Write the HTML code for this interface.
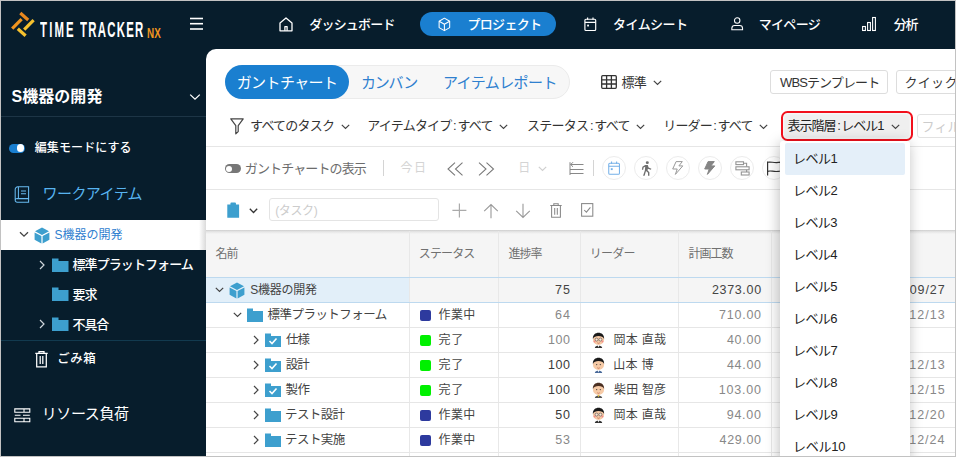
<!DOCTYPE html>
<html lang="ja">
<head>
<meta charset="utf-8">
<title>TimeTracker NX</title>
<style>
*{box-sizing:border-box;margin:0;padding:0}
html,body{width:956px;height:457px;overflow:hidden;background:#071d2c}
body{font-family:"Liberation Sans","Noto Sans CJK JP",sans-serif;font-size:13px;color:#333;position:relative}
#frame{position:absolute;left:0;top:0;width:956px;height:457px;border:1px solid #c2c2c2;z-index:100;pointer-events:none}
.nav{position:absolute;top:0;left:0;width:956px;height:48px;background:#071d2c;color:#fff}
.side{position:absolute;left:0;top:0;width:206px;height:457px;color:#fff}
.panel{position:absolute;left:206px;top:48.5px;width:750px;height:409px;background:#fff;border-top-left-radius:10px;overflow:hidden}
.t{position:absolute;white-space:nowrap;line-height:1;transform-origin:0 50%}
.hl{position:absolute;height:1px;background:#e6e6e6}
.vl{position:absolute;width:1px;background:#e8e8e8}
svg{position:absolute;overflow:visible}
.b{font-weight:bold}
.cb{position:absolute;top:156px;width:24px;height:24px;border-radius:12px;border:1px solid #ececec;background:#fff}
</style>
</head>
<body>
<div class="nav">
  <!-- logo -->
  <svg style="left:0;top:0" width="206" height="48" viewBox="0 0 206 48">
    <g stroke-width="3.2" stroke-linecap="butt" fill="none">
      <line x1="20.3" y1="13" x2="28.2" y2="20" stroke="#e8871e"/>
      <line x1="12.2" y1="28.6" x2="21.6" y2="19.2" stroke="#f0951f"/>
      <line x1="24.2" y1="29.6" x2="33.6" y2="20.2" stroke="#f6c12e"/>
      <line x1="17.8" y1="28.8" x2="25.6" y2="35.8" stroke="#f6c12e"/>
    </g>
    <g stroke="#fff" stroke-width="1.6" fill="none">
      <line x1="190" y1="18.5" x2="203" y2="18.5"/><line x1="190" y1="23.7" x2="203" y2="23.7"/><line x1="190" y1="29" x2="203" y2="29"/>
    </g>
  </svg>
  <div style="position:absolute;left:420px;top:12px;width:136px;height:24px;border-radius:12px;background:#1a7fd0"></div>
  <!-- home -->
  <svg style="left:279px;top:16.6px" width="14" height="14.6" viewBox="0 0 14 14.6" fill="none" stroke="#fff" stroke-width="1.3" stroke-linejoin="round"><path d="M1 6 L7 0.9 L13 6 V13.8 H1 Z"/><path d="M5.9 13.8 V9.6 H8.1 V13.8"/></svg>
  <!-- cube -->
  <svg style="left:437.6px;top:16.6px" width="12.8" height="14.8" viewBox="0 0 16 18" fill="none" stroke="#fff" stroke-width="1.3" stroke-linejoin="round"><path d="M8 1.2 L14.6 5 V13 L8 16.8 L1.4 13 V5 Z"/><path d="M1.4 5 L8 8.8 L14.6 5 M8 8.8 V16.8"/></svg>
  <!-- calendar -->
  <svg style="left:583.5px;top:17px" width="12.6" height="14.4" viewBox="0 0 14 16" fill="none" stroke="#fff" stroke-width="1.3"><rect x="1" y="2.5" width="12" height="12.5" rx="1.2"/><path d="M1 6 H13 M4 0.5 V3 M10 0.5 V3"/><rect x="3.5" y="8.5" width="2" height="2" fill="#fff" stroke="none"/></svg>
  <!-- person -->
  <svg style="left:730.5px;top:16px" width="12.4" height="15" viewBox="0 0 15 17" fill="none" stroke="#fff" stroke-width="1.3"><circle cx="7.5" cy="4.8" r="3.3"/><path d="M1 16 V14.5 A3.5 3.5 0 0 1 4.5 11 H10.5 A3.5 3.5 0 0 1 14 14.5 V16 Z"/></svg>
  <!-- chart -->
  <svg style="left:862px;top:16px" width="14" height="16" viewBox="0 0 14 16" fill="none" stroke="#fff" stroke-width="1.1"><rect x="0.6" y="10.5" width="2.8" height="4"/><rect x="5.6" y="6.5" width="2.8" height="8"/><rect x="10.6" y="1.5" width="2.8" height="13"/></svg>
</div>

<div class="side">
  <!-- title chevron -->
  <svg style="left:189px;top:93px" width="12" height="8" viewBox="0 0 12 8" fill="none" stroke="#fff" stroke-width="1.3"><path d="M1.2 1.6 L6 6.2 L10.8 1.6"/></svg>
  <div style="position:absolute;left:0;top:116px;width:206px;height:1px;background:#1d3546"></div>
  <!-- toggle -->
  <div style="position:absolute;left:9px;top:143.5px;width:16px;height:9px;border-radius:4.5px;background:#1a7fd0"></div>
  <div style="position:absolute;left:16.8px;top:144.3px;width:7.4px;height:7.4px;border-radius:4px;background:#fff"></div>
  <!-- book -->
  <svg style="left:14px;top:185.5px" width="16" height="17" viewBox="0 0 16 17" fill="none" stroke="#68baf0" stroke-width="1.05"><path d="M14.6 12.6 V0.8 H3.8 A2.6 2.6 0 0 0 1.2 3.4 V14.3 M1.2 14.3 A1.9 1.9 0 0 1 3.1 12.6 H14.6 V16.2 H3.1 A1.9 1.9 0 0 1 1.2 14.3 M4.4 0.8 V12.6 M7 5 H12 M7 7.8 H12"/></svg>
  <!-- selected -->
  <div style="position:absolute;left:0;top:220px;width:210px;height:30px;background:#fff"></div>
  <div style="position:absolute;left:199px;top:220px;width:7px;height:30px;background:linear-gradient(to right,#fff,#dadada)"></div>
  <svg style="left:19px;top:231px" width="10" height="7" viewBox="0 0 10 7" fill="none" stroke="#444" stroke-width="1.3"><path d="M1 1.2 L5 5.2 L9 1.2"/></svg>
  <svg style="left:34px;top:227px" width="16" height="17" viewBox="0 0 16 17"><path d="M8 0.5 L15 4.2 L8 7.9 L1 4.2 Z M0.6 5.4 L7.4 9 V16.5 L0.6 12.8 Z M15.4 5.4 L8.6 9 V16.5 L15.4 12.8 Z" fill="#3d9fce"/></svg>
  <!-- tree -->
  <svg style="left:39px;top:260px" width="6" height="10" viewBox="0 0 6 10" fill="none" stroke="#cfd6db" stroke-width="1.2"><path d="M1 1 L5 5 L1 9"/></svg>
  <svg style="left:52px;top:258px" width="17" height="14" viewBox="0 0 17 14"><path d="M0 0.5 H6.5 V3 H16.5 V14 H0 Z" fill="#3d9fce"/></svg>
  <svg style="left:52px;top:287px" width="17" height="14" viewBox="0 0 17 14"><path d="M0 0.5 H6.5 V3 H16.5 V14 H0 Z" fill="#3d9fce"/></svg>
  <svg style="left:39px;top:319px" width="6" height="10" viewBox="0 0 6 10" fill="none" stroke="#cfd6db" stroke-width="1.2"><path d="M1 1 L5 5 L1 9"/></svg>
  <svg style="left:52px;top:317px" width="17" height="14" viewBox="0 0 17 14"><path d="M0 0.5 H6.5 V3 H16.5 V14 H0 Z" fill="#3d9fce"/></svg>
  <div style="position:absolute;left:0;top:339.5px;width:206px;height:1px;background:#123a4f"></div>
  <!-- trash -->
  <svg style="left:34.5px;top:350.5px" width="13" height="17" viewBox="0 0 13 17" fill="none" stroke="#fff" stroke-width="1.25"><path d="M0.3 2.3 H12.7 M4 2.3 V0.7 H9 V2.3 M1.7 2.3 V15.8 H11.3 V2.3 M5.2 5 V13 M7.8 5 V13"/></svg>
  <!-- resource -->
  <svg style="left:14px;top:408px" width="17" height="15" viewBox="0 0 17 15" fill="none" stroke="#fff" stroke-width="1.1"><path d="M0.8 0.9 H15.8 V4.3 H0.8 Z M10 0.9 V4.3 M0.8 7.3 H6.5 M9 7.3 H15.8 M0.8 10.3 H15.8 V13.7 H0.8 Z M10 10.3 V13.7"/></svg>
</div>

<div class="panel"></div>
<div id="pc" style="position:absolute;left:0;top:0;width:956px;height:457px;overflow:hidden">
<div style="position:absolute;left:225px;top:65px;width:345px;height:34px;border-radius:17px;background:#f7f7f7;border:1px solid #ebebeb"></div>
<div style="position:absolute;left:225px;top:65px;width:124px;height:34px;border-radius:17px;background:#1a7fd0"></div>
<svg style="left:601px;top:75px" width="16" height="14" viewBox="0 0 16 14" fill="none" stroke="#333" stroke-width="1.3"><rect x="0.7" y="0.7" width="14.6" height="12.6" rx="1"/><path d="M0.7 4.8 H15.3 M0.7 9 H15.3 M5.6 0.7 V13.3 M10.4 0.7 V13.3"/></svg>
<svg style="left:653px;top:80px" width="9" height="6" viewBox="0 0 9 6" fill="none" stroke="#444" stroke-width="1.2"><path d="M0.8 0.8 L4.5 4.5 L8.2 0.8"/></svg>
<div style="position:absolute;left:770px;top:70px;width:118px;height:24px;border:1px solid #ddd;border-radius:3px;background:#fff"></div>
<div style="position:absolute;left:896px;top:70px;width:80px;height:24px;border:1px solid #ddd;border-radius:3px;background:#fff"></div>
<svg style="left:230px;top:117.5px" width="14" height="17" viewBox="0 0 14 17" fill="none" stroke="#444" stroke-width="1.2" stroke-linejoin="round"><path d="M0.8 0.8 H13.2 L8.2 7.6 V13.6 L5.8 15.8 V7.6 Z"/></svg>
<svg style="left:341px;top:123.5px" width="9" height="6" viewBox="0 0 9 6" fill="none" stroke="#444" stroke-width="1.2"><path d="M0.8 0.8 L4.5 4.5 L8.2 0.8"/></svg>
<svg style="left:499px;top:123.5px" width="9" height="6" viewBox="0 0 9 6" fill="none" stroke="#444" stroke-width="1.2"><path d="M0.8 0.8 L4.5 4.5 L8.2 0.8"/></svg>
<svg style="left:636px;top:123.5px" width="9" height="6" viewBox="0 0 9 6" fill="none" stroke="#444" stroke-width="1.2"><path d="M0.8 0.8 L4.5 4.5 L8.2 0.8"/></svg>
<svg style="left:759px;top:123.5px" width="9" height="6" viewBox="0 0 9 6" fill="none" stroke="#444" stroke-width="1.2"><path d="M0.8 0.8 L4.5 4.5 L8.2 0.8"/></svg>
<div style="position:absolute;left:781px;top:111px;width:132px;height:30px;border:2.4px solid #f2101c;border-radius:6.5px;background:#efefef;box-shadow:inset 0 0 2px 1px #fafafa"></div>
<svg style="left:891px;top:123.5px" width="9" height="6" viewBox="0 0 9 6" fill="none" stroke="#444" stroke-width="1.2"><path d="M0.8 0.8 L4.5 4.5 L8.2 0.8"/></svg>
<div style="position:absolute;left:917px;top:114px;width:60px;height:24px;border:1px solid #e2e2e2;border-radius:3px;background:#fff"></div>
<div class="hl" style="left:206px;top:146px;width:750px"></div>
<div class="hl" style="left:206px;top:189px;width:750px"></div>
<div style="position:absolute;left:224.5px;top:164px;width:16px;height:9px;border-radius:4.5px;background:#777"></div>
<div style="position:absolute;left:226px;top:165.5px;width:6px;height:6px;border-radius:3px;background:#fff"></div>
<div class="vl" style="left:383px;top:160px;height:16px;background:#d4d4d4"></div>
<svg style="left:447.2px;top:161.5px" width="17" height="14" viewBox="0 0 17 14" fill="none" stroke="#777" stroke-width="1.05"><path d="M8 0.7 L1 7 L8 13.3 M15.5 0.7 L8.5 7 L15.5 13.3"/></svg>
<svg style="left:478.3px;top:161.5px" width="17" height="14" viewBox="0 0 17 14" fill="none" stroke="#777" stroke-width="1.05"><path d="M1 0.7 L8 7 L1 13.3 M8.5 0.7 L15.5 7 L8.5 13.3"/></svg>
<svg style="left:537.5px;top:166px" width="9" height="6" viewBox="0 0 9 6" fill="none" stroke="#d0d0d0" stroke-width="1.2"><path d="M0.8 0.8 L4.5 4.5 L8.2 0.8"/></svg>
<svg style="left:568.5px;top:161px" width="15" height="15" viewBox="0 0 15 15" fill="none" stroke="#888" stroke-width="1"><path d="M1 1.2 V14 M1.5 3.5 H14.5 M4 1.2 L1.7 3.5 L4 5.8 M1 8.5 H14.5 M1 12.5 H14.5"/></svg>
<div class="vl" style="left:593px;top:160px;height:16px;background:#d4d4d4"></div>
<div class="cb" style="left:602px"></div>
<div class="cb" style="left:634px"></div>
<div class="cb" style="left:666px"></div>
<div class="cb" style="left:698px"></div>
<div class="cb" style="left:730px"></div>
<div class="cb" style="left:762px"></div>
<svg style="left:608px;top:160.8px" width="12.2" height="14.4" viewBox="0 0 13 15" fill="none" stroke="#74b0e8" stroke-width="1.1"><rect x="0.8" y="2.2" width="11.4" height="11.8" rx="1.2"/><path d="M0.8 5.5 H12.2 M3.8 0.3 V2.8 M9.2 0.3 V2.8"/><rect x="3" y="7.5" width="2" height="2" fill="#74b0e8" stroke="none"/></svg>
<svg style="left:641px;top:160.5px" width="11" height="16" viewBox="0 0 11 16" fill="#6e6e6e" stroke="none"><g transform="scale(1.0,0.94)"><circle cx="6.3" cy="1.8" r="1.5"/><path d="M4.2 4.2 L6.8 4.2 L7.6 7 L10.4 8.2 L9.9 9.4 L6.8 8.2 L6.6 10 L8.4 12 L8.4 15.8 L7 15.8 L7 12.6 L5 10.6 L3.6 15.8 L2.1 15.8 L3.9 9.8 L4.2 6.2 L2.6 7 L2.2 9.4 L0.9 9.2 L1.4 6.1 Z"/></g></svg>
<svg style="left:672.3px;top:161.3px" width="12" height="14" viewBox="0 0 12 14" fill="none" stroke="#999" stroke-width="1" stroke-linejoin="round"><path d="M4.1 0.6 H10.3 L6.9 4.9 H10.8 L3.4 13.4 L5.2 8 H0.7 Z"/></svg>
<svg style="left:704.3px;top:161.3px" width="12" height="14" viewBox="0 0 12 14" fill="#858585" stroke="#858585" stroke-width="1" stroke-linejoin="round"><path d="M4.1 0.6 H10.3 L6.9 4.9 H10.8 L3.4 13.4 L5.2 8 H0.7 Z"/></svg>
<svg style="left:734.5px;top:160.7px" width="16" height="15" viewBox="0 0 16 15" fill="none" stroke="#949494" stroke-width="1.1"><rect x="0.9" y="0.8" width="7.6" height="2.8"/><rect x="0.9" y="5.8" width="13.2" height="3"/><rect x="6.3" y="11" width="7.8" height="3"/><path d="M8.5 2.2 H11.6 V5.8 M11.6 8.8 V11"/></svg>
<svg style="left:767px;top:160.5px" width="15" height="15" viewBox="0 0 15 15" fill="none" stroke="#333" stroke-width="1.2"><path d="M0.6 0.4 V14.6 M0.6 1.3 C4 0.2 7 2.6 13.5 1.2 V10 C7 11.6 4 9 0.6 10.4"/></svg>
<svg style="left:227px;top:201.5px" width="12.4" height="16" viewBox="0 0 13 16" preserveAspectRatio="none"><path d="M0.3 2.6 H3.6 V1.4 A1 1 0 0 1 4.6 0.4 H8.4 A1 1 0 0 1 9.4 1.4 V2.6 H12.7 V15.8 H0.3 Z" fill="#3d9fce"/></svg>
<svg style="left:249px;top:207.5px" width="9" height="6" viewBox="0 0 9 6" fill="none" stroke="#333" stroke-width="1.3"><path d="M0.8 0.8 L4.5 4.5 L8.2 0.8"/></svg>
<div style="position:absolute;left:269px;top:198px;width:170px;height:23px;border:1px solid #e4e4e4;border-radius:3px;background:#fff"></div>
<svg style="left:452px;top:203px" width="15" height="15" viewBox="0 0 15 15" fill="none" stroke="#aaa" stroke-width="1.2"><path d="M7.4 0.4 V14.4 M0.4 7.4 H14.4"/></svg>
<svg style="left:483px;top:202.5px" width="16" height="16" viewBox="0 0 16 16" fill="none" stroke="#999" stroke-width="1.1"><path d="M8 15.2 V1.5 M1.2 8.2 L8 1.5 L14.8 8.2"/></svg>
<svg style="left:515px;top:202.5px" width="16" height="16" viewBox="0 0 16 16" fill="none" stroke="#999" stroke-width="1.1"><path d="M8 0.8 V14.5 M1.2 7.8 L8 14.5 L14.8 7.8"/></svg>
<svg style="left:549.5px;top:202.5px" width="12" height="15" viewBox="0 0 12 15" fill="none" stroke="#888" stroke-width="1.05"><path d="M0.3 2.4 H11.7 M3.8 2.4 V0.7 H8.2 V2.4 M1.6 2.4 V14.2 H10.4 V2.4 M4.7 5 V11.8 M7.3 5 V11.8"/></svg>
<svg style="left:581px;top:203px" width="13" height="14" viewBox="0 0 13 14" fill="none" stroke="#888" stroke-width="1.05"><rect x="0.6" y="0.6" width="11.2" height="12.6"/><path d="M3.2 7 L5.4 9.2 L9.4 4.4"/></svg>
<div style="position:absolute;left:206px;top:230px;width:750px;height:47px;background:#f5f5f5"></div>
<div style="position:absolute;left:206px;top:230px;width:750px;height:4px;background:linear-gradient(#cdcdcd,#e4e4e4 40%,#f5f5f5)"></div>
<div style="position:absolute;left:206px;top:277px;width:204px;height:25px;background:#e2eff9"></div>
<div style="position:absolute;left:410px;top:277px;width:546px;height:25px;background:#f5f5f5"></div>
<div class="vl" style="left:409px;top:231px;height:226px"></div>
<div class="vl" style="left:498px;top:231px;height:226px"></div>
<div class="vl" style="left:580px;top:231px;height:226px"></div>
<div class="vl" style="left:678px;top:231px;height:226px"></div>
<div class="vl" style="left:771px;top:231px;height:226px"></div>
<div class="hl" style="left:206px;top:277px;width:750px;background:#bdd9ef"></div>
<div class="hl" style="left:206px;top:302px;width:750px;background:#bdd9ef"></div>
<div class="hl" style="left:206px;top:327px;width:750px"></div>
<div class="hl" style="left:206px;top:352px;width:750px"></div>
<div class="hl" style="left:206px;top:377px;width:750px"></div>
<div class="hl" style="left:206px;top:402px;width:750px"></div>
<div class="hl" style="left:206px;top:427px;width:750px"></div>
<div class="hl" style="left:206px;top:452px;width:750px"></div>
<svg style="left:214.5px;top:287px" width="9" height="6" viewBox="0 0 9 6" fill="none" stroke="#444" stroke-width="1.2"><path d="M0.8 0.8 L4.5 4.5 L8.2 0.8"/></svg>
<svg style="left:229px;top:282px" width="16" height="17" viewBox="0 0 16 17"><path d="M8 0.5 L15 4.2 L8 7.9 L1 4.2 Z M0.6 5.4 L7.4 9 V16.5 L0.6 12.8 Z M15.4 5.4 L8.6 9 V16.5 L15.4 12.8 Z" fill="#3d9fce"/></svg>
<svg style="left:232.5px;top:312px" width="9" height="6" viewBox="0 0 9 6" fill="none" stroke="#444" stroke-width="1.2"><path d="M0.8 0.8 L4.5 4.5 L8.2 0.8"/></svg>
<svg style="left:247px;top:308px" width="16" height="14" viewBox="0 0 16 14"><path d="M0 0.5 H6 V3 H16 V14 H0 Z" fill="#3d9fce"/></svg>
<svg style="left:252.5px;top:335px" width="6" height="10" viewBox="0 0 6 10" fill="none" stroke="#444" stroke-width="1.2"><path d="M1 1 L5 5 L1 9"/></svg>
<svg style="left:265px;top:333px" width="16" height="14" viewBox="0 0 16 14"><path d="M0 0.5 H6 V3 H16 V14 H0 Z" fill="#3d9fce"/><path d="M4.5 8 L7 10.5 L11.5 5.5" fill="none" stroke="#fff" stroke-width="1.6"/></svg>
<svg style="left:252.5px;top:360px" width="6" height="10" viewBox="0 0 6 10" fill="none" stroke="#444" stroke-width="1.2"><path d="M1 1 L5 5 L1 9"/></svg>
<svg style="left:265px;top:358px" width="16" height="14" viewBox="0 0 16 14"><path d="M0 0.5 H6 V3 H16 V14 H0 Z" fill="#3d9fce"/><path d="M4.5 8 L7 10.5 L11.5 5.5" fill="none" stroke="#fff" stroke-width="1.6"/></svg>
<svg style="left:252.5px;top:385px" width="6" height="10" viewBox="0 0 6 10" fill="none" stroke="#444" stroke-width="1.2"><path d="M1 1 L5 5 L1 9"/></svg>
<svg style="left:265px;top:383px" width="16" height="14" viewBox="0 0 16 14"><path d="M0 0.5 H6 V3 H16 V14 H0 Z" fill="#3d9fce"/><path d="M4.5 8 L7 10.5 L11.5 5.5" fill="none" stroke="#fff" stroke-width="1.6"/></svg>
<svg style="left:252.5px;top:410px" width="6" height="10" viewBox="0 0 6 10" fill="none" stroke="#444" stroke-width="1.2"><path d="M1 1 L5 5 L1 9"/></svg>
<svg style="left:265px;top:408px" width="16" height="14" viewBox="0 0 16 14"><path d="M0 0.5 H6 V3 H16 V14 H0 Z" fill="#3d9fce"/></svg>
<svg style="left:252.5px;top:435px" width="6" height="10" viewBox="0 0 6 10" fill="none" stroke="#444" stroke-width="1.2"><path d="M1 1 L5 5 L1 9"/></svg>
<svg style="left:265px;top:433px" width="16" height="14" viewBox="0 0 16 14"><path d="M0 0.5 H6 V3 H16 V14 H0 Z" fill="#3d9fce"/></svg>
<div style="position:absolute;left:420px;top:309.5px;width:11px;height:11px;border-radius:2px;background:#2d3a9e"></div>
<div style="position:absolute;left:420px;top:334.5px;width:11px;height:11px;border-radius:2px;background:#00f000"></div>
<div style="position:absolute;left:420px;top:359.5px;width:11px;height:11px;border-radius:2px;background:#00f000"></div>
<div style="position:absolute;left:420px;top:384.5px;width:11px;height:11px;border-radius:2px;background:#00f000"></div>
<div style="position:absolute;left:420px;top:409.5px;width:11px;height:11px;border-radius:2px;background:#2d3a9e"></div>
<div style="position:absolute;left:420px;top:434.5px;width:11px;height:11px;border-radius:2px;background:#2d3a9e"></div>
<svg style="left:591.5px;top:331.5px" width="13" height="16" viewBox="0 0 13 16"><path d="M2.8 16 C2.8 12.6 10.2 12.6 10.2 16 Z" fill="#333"/><path d="M5.6 13 L6.5 15.6 L7.4 13 Z" fill="#fff"/><ellipse cx="6.5" cy="7.4" rx="5.6" ry="5.6" fill="#f6caa6"/><path d="M0.9 7 C0.2 -1.2 12.8 -1.2 12.1 7 C11.2 4.6 9.2 3.9 6.5 3.9 C3.8 3.9 1.8 4.6 0.9 7 Z" fill="#1a1a1a"/><circle cx="4.6" cy="7.6" r="1.5" fill="#fbe6d6" stroke="#333" stroke-width=".5"/><circle cx="8.4" cy="7.6" r="1.5" fill="#fbe6d6" stroke="#333" stroke-width=".5"/><circle cx="2.6" cy="9.6" r="1" fill="#f08a8a"/><circle cx="10.4" cy="9.6" r="1" fill="#f08a8a"/><path d="M5.2 10.8 Q6.5 11.8 7.8 10.8" fill="none" stroke="#b5533c" stroke-width=".6"/></svg>
<svg style="left:591.5px;top:356.5px" width="13" height="16" viewBox="0 0 13 16"><path d="M2.8 16 C2.8 12.6 10.2 12.6 10.2 16 Z" fill="#4a6a9a"/><path d="M5.6 13 L6.5 15.6 L7.4 13 Z" fill="#fff"/><ellipse cx="6.5" cy="7.4" rx="5.6" ry="5.6" fill="#f6caa6"/><path d="M0.9 7 C0.2 -1.2 12.8 -1.2 12.1 7 C11.2 4.6 9.2 3.9 6.5 3.9 C3.8 3.9 1.8 4.6 0.9 7 Z" fill="#1a1a1a"/><circle cx="4.7" cy="7.6" r=".6" fill="#333"/><circle cx="8.3" cy="7.6" r=".6" fill="#333"/><path d="M5.2 10.8 Q6.5 11.8 7.8 10.8" fill="none" stroke="#b5533c" stroke-width=".6"/></svg>
<svg style="left:591.5px;top:381.5px" width="13" height="16" viewBox="0 0 13 16"><path d="M2.8 16 C2.8 12.6 10.2 12.6 10.2 16 Z" fill="#555"/><path d="M5.6 13 L6.5 15.6 L7.4 13 Z" fill="#e6c030"/><ellipse cx="6.5" cy="7.4" rx="5.6" ry="5.6" fill="#f6caa6"/><path d="M0.9 7 C0.2 -1.2 12.8 -1.2 12.1 7 C11.2 4.6 9.2 3.9 6.5 3.9 C3.8 3.9 1.8 4.6 0.9 7 Z" fill="#4a2f22"/><circle cx="4.7" cy="7.6" r=".6" fill="#333"/><circle cx="8.3" cy="7.6" r=".6" fill="#333"/><path d="M5.2 10.8 Q6.5 11.8 7.8 10.8" fill="none" stroke="#b5533c" stroke-width=".6"/></svg>
<svg style="left:591.5px;top:406.5px" width="13" height="16" viewBox="0 0 13 16"><path d="M2.8 16 C2.8 12.6 10.2 12.6 10.2 16 Z" fill="#333"/><path d="M5.6 13 L6.5 15.6 L7.4 13 Z" fill="#fff"/><ellipse cx="6.5" cy="7.4" rx="5.6" ry="5.6" fill="#f6caa6"/><path d="M0.9 7 C0.2 -1.2 12.8 -1.2 12.1 7 C11.2 4.6 9.2 3.9 6.5 3.9 C3.8 3.9 1.8 4.6 0.9 7 Z" fill="#1a1a1a"/><circle cx="4.6" cy="7.6" r="1.5" fill="#fbe6d6" stroke="#333" stroke-width=".5"/><circle cx="8.4" cy="7.6" r="1.5" fill="#fbe6d6" stroke="#333" stroke-width=".5"/><circle cx="2.6" cy="9.6" r="1" fill="#f08a8a"/><circle cx="10.4" cy="9.6" r="1" fill="#f08a8a"/><path d="M5.2 10.8 Q6.5 11.8 7.8 10.8" fill="none" stroke="#b5533c" stroke-width=".6"/></svg>
<div style="position:absolute;left:780px;top:141px;width:130px;height:330px;background:#fff;border-radius:3px;box-shadow:-1px 2px 14px rgba(0,0,0,.26);z-index:50"></div>
<div style="position:absolute;left:785px;top:143px;width:120px;height:32px;background:#e4eff9;border-radius:2px;z-index:51"></div>
</div>

<div id="texts">
<div class="t" id="t0" style="left:39.8px;top:19.55px;font-size:21.5px;color:#fff;letter-spacing:4.088px;font-weight:bold;transform:scaleX(.53)">TIME</div>
<div class="t" id="t1" style="left:79.8px;top:19.55px;font-size:21.5px;color:#fff;letter-spacing:2.358px;font-weight:bold;transform:scaleX(.53)">TRACKER</div>
<div class="t" id="t2" style="left:147.05px;top:25.75px;font-size:14.5px;color:#f0951f;letter-spacing:0.368px;font-weight:bold;transform:scaleX(.68)">NX</div>
<div class="t" id="t3" style="left:309.25px;top:17.5px;font-size:13px;color:#fff;letter-spacing:-0.792px;font-weight:500">ダッシュボード</div>
<div class="t" id="t4" style="left:467.5px;top:17.5px;font-size:13px;color:#fff;letter-spacing:-0.700px;font-weight:500">プロジェクト</div>
<div class="t" id="t5" style="left:613px;top:17.5px;font-size:13px;color:#fff;letter-spacing:-0.550px;font-weight:500">タイムシート</div>
<div class="t" id="t6" style="left:758.75px;top:17.5px;font-size:13px;color:#fff;letter-spacing:-0.688px;font-weight:500">マイページ</div>
<div class="t" id="t7" style="left:893.75px;top:17.5px;font-size:13px;color:#fff;letter-spacing:-1.250px;font-weight:500">分析</div>
<div class="t" id="t8" style="left:11.5px;top:88.8px;font-size:16px;color:#fff;letter-spacing:0.050px;font-weight:bold">S機器の開発</div>
<div class="t" id="t9" style="left:34.75px;top:142px;font-size:12px;color:#fff;letter-spacing:0.107px;font-weight:500">編集モードにする</div>
<div class="t" id="t10" style="left:42.6px;top:186px;font-size:15px;color:#58b4f0;letter-spacing:-0.583px;">ワークアイテム</div>
<div class="t" id="t11" style="left:54.5px;top:229px;font-size:12px;color:#2f80cf;letter-spacing:0.000px;">S機器の開発</div>
<div class="t" id="t12" style="left:72.5px;top:257.8px;font-size:13px;color:#fff;letter-spacing:-0.917px;font-weight:500">標準プラットフォーム</div>
<div class="t" id="t13" style="left:72.5px;top:287.5px;font-size:13px;color:#fff;letter-spacing:-1.000px;font-weight:500">要求</div>
<div class="t" id="t14" style="left:72.5px;top:317.5px;font-size:13px;color:#fff;letter-spacing:-1.125px;font-weight:500">不具合</div>
<div class="t" id="t15" style="left:57.25px;top:353.15px;font-size:12.5px;color:#fff;letter-spacing:0.500px;font-weight:500">ごみ箱</div>
<div class="t" id="t16" style="left:41.75px;top:406px;font-size:15px;color:#fff;letter-spacing:-0.400px;">リソース負荷</div>
<div class="t" id="t17" style="left:236.7px;top:74.5px;font-size:15px;color:#fff;letter-spacing:-0.583px;">ガントチャート</div>
<div class="t" id="t18" style="left:360.95px;top:74.5px;font-size:15px;color:#2f80cf;letter-spacing:-1.167px;">カンバン</div>
<div class="t" id="t19" style="left:442.95px;top:74.5px;font-size:15px;color:#2f80cf;letter-spacing:-0.571px;">アイテムレポート</div>
<div class="t" id="t20" style="left:621.5px;top:75.5px;font-size:13px;color:#333;letter-spacing:-0.750px;">標準</div>
<div class="t" id="t21" style="left:780px;top:75.5px;font-size:13px;color:#333;letter-spacing:-0.875px;">WBSテンプレート</div>
<div class="t" id="t22" style="left:904.5px;top:75.5px;font-size:13px;color:#333;letter-spacing:0.312px;">クイックW</div>
<div class="t" id="t23" style="left:250.05px;top:119px;font-size:13px;color:#333;letter-spacing:-0.750px;">すべてのタスク</div>
<div class="t" id="t24" style="left:367.3px;top:119px;font-size:13px;color:#333;letter-spacing:-0.775px;">アイテムタイプ<span style="margin:0 1.5px">:</span>すべて</div>
<div class="t" id="t25" style="left:527px;top:119px;font-size:13px;color:#333;letter-spacing:-0.719px;">ステータス<span style="margin:0 1.5px">:</span>すべて</div>
<div class="t" id="t26" style="left:663.25px;top:119px;font-size:13px;color:#333;letter-spacing:-0.857px;">リーダー<span style="margin:0 1.5px">:</span>すべて</div>
<div class="t" id="t27" style="left:787.5px;top:119px;font-size:13px;color:#222;letter-spacing:-0.969px;">表示階層<span style="margin:0 1.5px">:</span>レベル1</div>
<div class="t" id="t28" style="left:921.5px;top:119.5px;font-size:13px;color:#ccc;letter-spacing:0.167px;">フィルタ</div>
<div class="t" id="t29" style="left:244.75px;top:161.5px;font-size:13px;color:#6c6c6c;letter-spacing:-0.861px;">ガントチャートの表示</div>
<div class="t" id="t30" style="left:400.5px;top:162px;font-size:12px;color:#d4d4d4;letter-spacing:1.500px;">今日</div>
<div class="t" id="t31" style="left:518.3px;top:162px;font-size:12px;color:#d4d4d4;letter-spacing:0.000px;">日</div>
<div class="t" id="t32" style="left:275.25px;top:204.5px;font-size:12px;color:#ccc;letter-spacing:-0.375px;">(タスク)</div>
<div class="t" id="t33" style="left:215.5px;top:248px;font-size:12px;color:#707070;letter-spacing:-1.000px;">名前</div>
<div class="t" id="t34" style="left:418.75px;top:248px;font-size:12px;color:#707070;letter-spacing:-0.875px;">ステータス</div>
<div class="t" id="t35" style="left:508.5px;top:248px;font-size:12px;color:#707070;letter-spacing:-1.000px;">進捗率</div>
<div class="t" id="t36" style="left:589.75px;top:248px;font-size:12px;color:#707070;letter-spacing:-0.750px;">リーダー</div>
<div class="t" id="t37" style="left:688.5px;top:248px;font-size:12px;color:#707070;letter-spacing:-1.000px;">計画工数</div>
<div class="t" id="t38" style="left:250.2px;top:284px;font-size:12px;color:#444;letter-spacing:-0.250px;">S機器の開発</div>
<div class="t" id="t39" style="left:267.5px;top:308.75px;font-size:12.5px;color:#444;letter-spacing:-0.528px;">標準プラットフォーム</div>
<div class="t" id="t40" style="left:286.05px;top:333.75px;font-size:12.5px;color:#444;letter-spacing:-1.000px;">仕様</div>
<div class="t" id="t41" style="left:285.8px;top:358.75px;font-size:12.5px;color:#444;letter-spacing:-1.000px;">設計</div>
<div class="t" id="t42" style="left:285.55px;top:383.75px;font-size:12.5px;color:#444;letter-spacing:-0.500px;">製作</div>
<div class="t" id="t43" style="left:285.05px;top:408.75px;font-size:12.5px;color:#444;letter-spacing:-0.625px;">テスト設計</div>
<div class="t" id="t44" style="left:285.05px;top:433.75px;font-size:12.5px;color:#444;letter-spacing:-0.562px;">テスト実施</div>
<div class="t" id="t45" style="left:438.5px;top:309px;font-size:12px;color:#444;letter-spacing:0.375px;">作業中</div>
<div class="t" id="t46" style="left:438.5px;top:334px;font-size:12px;color:#444;letter-spacing:0.750px;">完了</div>
<div class="t" id="t47" style="left:438.5px;top:359px;font-size:12px;color:#444;letter-spacing:0.750px;">完了</div>
<div class="t" id="t48" style="left:438.5px;top:384px;font-size:12px;color:#444;letter-spacing:0.750px;">完了</div>
<div class="t" id="t49" style="left:438.5px;top:409px;font-size:12px;color:#444;letter-spacing:0.375px;">作業中</div>
<div class="t" id="t50" style="left:438.5px;top:434px;font-size:12px;color:#444;letter-spacing:0.375px;">作業中</div>
<div class="t" id="t51" style="left:555.05px;top:283.75px;font-size:12.5px;color:#444;letter-spacing:1.000px;">75</div>
<div class="t" id="t52" style="left:555.05px;top:308.75px;font-size:12.5px;color:#888;letter-spacing:1.000px;">64</div>
<div class="t" id="t53" style="left:547.9px;top:333.75px;font-size:12.5px;color:#888;letter-spacing:0.625px;">100</div>
<div class="t" id="t54" style="left:547.9px;top:358.75px;font-size:12.5px;color:#3a3a3a;letter-spacing:0.625px;">100</div>
<div class="t" id="t55" style="left:547.9px;top:383.75px;font-size:12.5px;color:#3a3a3a;letter-spacing:0.625px;">100</div>
<div class="t" id="t56" style="left:555.3px;top:408.75px;font-size:12.5px;color:#3a3a3a;letter-spacing:0.750px;">50</div>
<div class="t" id="t57" style="left:555.3px;top:433.75px;font-size:12.5px;color:#888;letter-spacing:0.750px;">53</div>
<div class="t" id="t58" style="left:613.5px;top:333.5px;font-size:12px;color:#444;letter-spacing:0.312px;">岡本 直哉</div>
<div class="t" id="t59" style="left:613.25px;top:358.5px;font-size:12px;color:#444;letter-spacing:0.333px;">山本 博</div>
<div class="t" id="t60" style="left:614px;top:383.5px;font-size:12px;color:#444;letter-spacing:0.188px;">柴田 智彦</div>
<div class="t" id="t61" style="left:613.5px;top:408.5px;font-size:12px;color:#444;letter-spacing:0.312px;">岡本 直哉</div>
<div class="t" id="t62" style="left:711.9px;top:283.75px;font-size:12.5px;color:#444;letter-spacing:0.667px;">2373.00</div>
<div class="t" id="t63" style="left:719.05px;top:308.75px;font-size:12.5px;color:#888;letter-spacing:0.750px;">710.00</div>
<div class="t" id="t64" style="left:726.95px;top:333.75px;font-size:12.5px;color:#888;letter-spacing:0.687px;">40.00</div>
<div class="t" id="t65" style="left:726.95px;top:358.75px;font-size:12.5px;color:#888;letter-spacing:0.687px;">44.00</div>
<div class="t" id="t66" style="left:718.8px;top:383.75px;font-size:12.5px;color:#888;letter-spacing:0.800px;">103.00</div>
<div class="t" id="t67" style="left:726.7px;top:408.75px;font-size:12.5px;color:#888;letter-spacing:0.750px;">94.00</div>
<div class="t" id="t68" style="left:719.55px;top:433.75px;font-size:12.5px;color:#888;letter-spacing:0.650px;">429.00</div>
<div class="t" id="t69" style="left:909.8px;top:283.75px;font-size:12.5px;color:#444;letter-spacing:0.875px;">09/27</div>
<div class="t" id="t70" style="left:909.3px;top:308.75px;font-size:12.5px;color:#888;letter-spacing:1.000px;">12/13</div>
<div class="t" id="t71" style="left:909.3px;top:358.75px;font-size:12.5px;color:#888;letter-spacing:1.000px;">12/13</div>
<div class="t" id="t72" style="left:909.3px;top:383.75px;font-size:12.5px;color:#888;letter-spacing:1.000px;">12/15</div>
<div class="t" id="t73" style="left:909.3px;top:408.75px;font-size:12.5px;color:#888;letter-spacing:1.000px;">12/20</div>
<div class="t" id="t74" style="left:909.3px;top:433.75px;font-size:12.5px;color:#888;letter-spacing:0.938px;">12/24</div>
<div class="t" id="t75" style="left:793px;top:152px;font-size:13px;color:#222;letter-spacing:-0.500px;z-index:60">レベル1</div>
<div class="t" id="t76" style="left:793px;top:184px;font-size:13px;color:#222;letter-spacing:-0.500px;z-index:60">レベル2</div>
<div class="t" id="t77" style="left:793px;top:216px;font-size:13px;color:#222;letter-spacing:-0.583px;z-index:60">レベル3</div>
<div class="t" id="t78" style="left:793px;top:248px;font-size:13px;color:#222;letter-spacing:-0.583px;z-index:60">レベル4</div>
<div class="t" id="t79" style="left:793px;top:280px;font-size:13px;color:#222;letter-spacing:-0.583px;z-index:60">レベル5</div>
<div class="t" id="t80" style="left:793px;top:312px;font-size:13px;color:#222;letter-spacing:-0.583px;z-index:60">レベル6</div>
<div class="t" id="t81" style="left:793px;top:344px;font-size:13px;color:#222;letter-spacing:-0.500px;z-index:60">レベル7</div>
<div class="t" id="t82" style="left:793px;top:376px;font-size:13px;color:#222;letter-spacing:-0.583px;z-index:60">レベル8</div>
<div class="t" id="t83" style="left:793px;top:408px;font-size:13px;color:#222;letter-spacing:-0.500px;z-index:60">レベル9</div>
<div class="t" id="t84" style="left:793px;top:440px;font-size:13px;color:#222;letter-spacing:-0.250px;z-index:60">レベル10</div>
</div>
<div id="frame"></div>
</body>
</html>
